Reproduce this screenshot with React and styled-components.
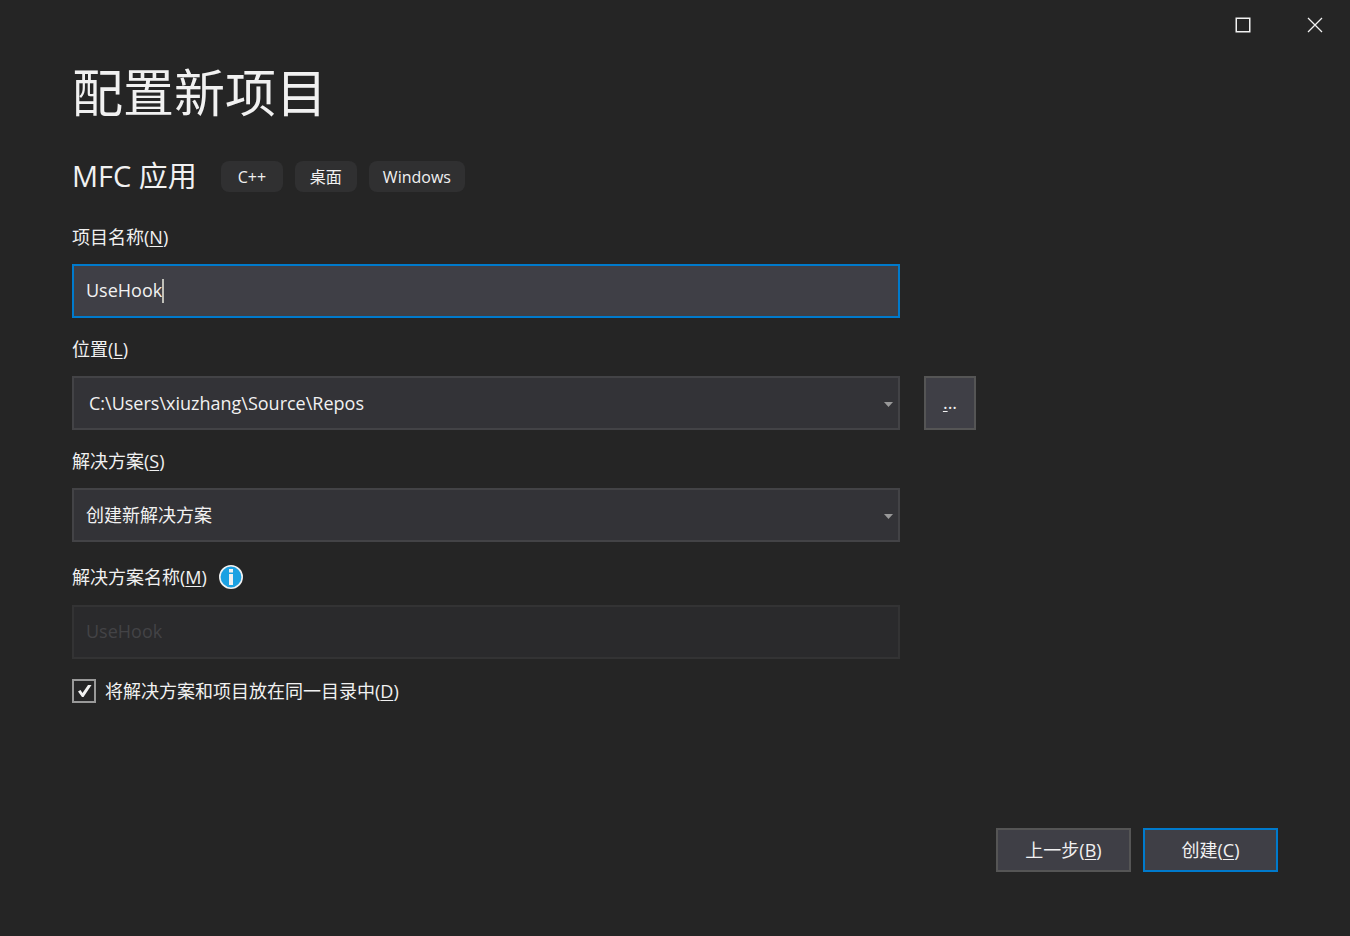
import React, { useState } from 'react'
import styled, { createGlobalStyle } from 'styled-components'

const GlobalStyle = createGlobalStyle`
    * {
        box-sizing: border-box;
    }
    body {
        margin: 0;
        background: #252525;
    }
    body, button, input, select {
        font-family: "Open Sans", "Noto Sans CJK SC", sans-serif;
        font-size: 18px;
        color: #f1f1f1;
    }
`;
const Window = styled.div`
    display: flex;
    flex-flow: column;
    min-height: 100vh;
    background: #252525;
`;
const TitleBar = styled.div`
    display: flex;
    justify-content: flex-end;
    gap: 2px;
`;
const WindowButton = styled.button`
    display: flex;
    align-items: center;
    justify-content: center;
    width: 70px;
    height: 50px;
    padding: 0;
    border: none;
    background: transparent;
`;
const Form = styled.form`
    display: flex;
    flex: 1;
    flex-flow: column;
    padding: 12px 72px 64px;
`;
const Title = styled.h1`
    margin: 0;
    font-size: 51px;
    font-weight: 400;
    line-height: 60px;
`;
const Template = styled.div`
    display: flex;
    align-items: center;
    gap: 12px;
    margin: 34px 0 30px;
`;
const TemplateName = styled.h2`
    margin: 0 12px 0 0;
    font-size: 29px;
    font-weight: 400;
    line-height: 40px;
`;
const Tag = styled.span`
    min-width: 62px;
    padding: 1px 14px 0;
    border-radius: 8px;
    background: #303031;
    font-size: 16px;
    line-height: 30px;
    text-align: center;
`;
const Fields = styled.div`
    display: flex;
    flex-flow: column;
    gap: 20px;
`;
const Field = styled.div`
    display: flex;
    flex-flow: column;
    gap: 14px;
`;
const LabelRow = styled.div`
    display: flex;
    align-items: ${({$tall}) => $tall ? 'center' : 'flex-start'};
    gap: 12px;
    height: ${({$tall}) => $tall ? '29px' : '24px'};
    line-height: 22px;
`;
const ControlRow = styled.div`
    display: flex;
    gap: 24px;
`;
const Key = styled.span`
    text-decoration: underline;
    text-decoration-thickness: 1px;
    text-underline-offset: 2px;
`;
const TextBox = styled.label`
    display: flex;
    align-items: center;
    flex: 0 1 828px;
    height: 54px;
    padding: 0 12px;
    border: 2px solid ${({$disabled}) => $disabled ? '#333334' : '#007acc'};
    background: ${({$disabled}) => $disabled ? '#2a2a2c' : '#3f3f46'};
`;
const Input = styled.input`
    field-sizing: content;
    max-width: 100%;
    padding: 0 0 2px;
    border: none;
    outline: none;
    background: transparent;
    caret-color: transparent;

    &:disabled {
        color: #434346;
    }
`;
const Caret = styled.span`
    width: 2px;
    height: 24px;
    background: #c0c0b9;
`;
const SelectBox = styled.div`
    position: relative;
    flex: 0 1 828px;
`;
const Select = styled.select`
    display: block;
    width: 100%;
    height: 54px;
    padding: 0 32px 0 ${({$editable}) => $editable ? '15px' : '12px'};
    appearance: none;
    border: 2px solid #434346;
    border-radius: 0;
    background: #333337;
`;
const Arrow = styled.svg`
    position: absolute;
    top: 26px;
    right: 7px;
    pointer-events: none;
`;
const Button = styled.button`
    width: ${({$small}) => $small ? '52px' : '135px'};
    height: ${({$small}) => $small ? '54px' : '44px'};
    padding: 0 0 2px;
    border: 2px solid ${({$primary}) => $primary ? '#007acc' : '#555555'};
    background: #3f3f46;
`;
const CheckRow = styled.div`
    display: flex;
    align-items: center;
    gap: 9px;
    line-height: 24px;
`;
const CheckBox = styled.span`
    display: grid;
    width: 24px;
    height: 24px;

    & > * {
        grid-area: 1 / 1;
    }
    svg {
        pointer-events: none;
    }
`;
const Check = styled.input`
    width: 24px;
    height: 24px;
    margin: 0;
    appearance: none;
    border: 2px solid #999999;
    background: #252526;
`;
const Footer = styled.div`
    display: flex;
    justify-content: flex-end;
    gap: 12px;
    margin-top: auto;
    padding-top: 24px;
`;

const ArrowIcon = () => (
    <Arrow width="9" height="5" viewBox="0 0 9 5" aria-hidden="true">
        <path d="M0 0h9L4.5 5z" fill="#999999" />
    </Arrow>
)

const InfoIcon = () => (
    <svg width="24" height="24" viewBox="0 0 24 24" aria-hidden="true">
        <circle cx="12" cy="12" r="11.2" fill="#1ba1e2" stroke="#f1f1f1" strokeWidth="1.6" />
        <path d="M10 4h4v3.500h-4zM10 9h4v11h-4z" fill="#f1f1f1" />
    </svg>
)

const App = () => {
    const [name, setName] = useState('UseHook')
    const [sameFolder, setSameFolder] = useState(true)
    return (
        <Window>
            <GlobalStyle />
            <TitleBar>
                <WindowButton aria-label="最大化">
                    <svg width="16" height="16" viewBox="0 0 16 16">
                        <path d="M1.25 1.25h13.5v13.5H1.25z" fill="none" stroke="#f1f1f1" strokeWidth="1.5" />
                    </svg>
                </WindowButton>
                <WindowButton aria-label="关闭">
                    <svg width="16" height="16" viewBox="0 0 16 16">
                        <path d="M1 1l14 14M15 1L1 15" stroke="#f1f1f1" strokeWidth="1.3" />
                    </svg>
                </WindowButton>
            </TitleBar>
            <Form onSubmit={e => e.preventDefault()}>
                <Title>配置新项目</Title>
                <Template>
                    <TemplateName>MFC 应用</TemplateName>
                    {['C++', '桌面', 'Windows'].map(item => (
                        <Tag key={item}>{item}</Tag>
                    ))}
                </Template>
                <Fields>
                    <Field>
                        <LabelRow>
                            <label htmlFor="project">项目名称(<Key>N</Key>)</label>
                        </LabelRow>
                        <ControlRow>
                            <TextBox htmlFor="project">
                                <Input id="project" value={name} onChange={e => setName(e.target.value)} />
                                <Caret />
                            </TextBox>
                        </ControlRow>
                    </Field>
                    <Field>
                        <LabelRow>
                            <label htmlFor="location">位置(<Key>L</Key>)</label>
                        </LabelRow>
                        <ControlRow>
                            <SelectBox>
                                <Select id="location" $editable>
                                    <option>C:\Users\xiuzhang\Source\Repos</option>
                                </Select>
                                <ArrowIcon />
                            </SelectBox>
                            <Button type="button" $small><Key>.</Key>..</Button>
                        </ControlRow>
                    </Field>
                    <Field>
                        <LabelRow>
                            <label htmlFor="solution">解决方案(<Key>S</Key>)</label>
                        </LabelRow>
                        <ControlRow>
                            <SelectBox>
                                <Select id="solution">
                                    <option>创建新解决方案</option>
                                </Select>
                                <ArrowIcon />
                            </SelectBox>
                        </ControlRow>
                    </Field>
                    <Field>
                        <LabelRow $tall>
                            <label htmlFor="solutionName">解决方案名称(<Key>M</Key>)</label>
                            <InfoIcon />
                        </LabelRow>
                        <ControlRow>
                            <TextBox htmlFor="solutionName" $disabled>
                                <Input id="solutionName" value={name} disabled />
                            </TextBox>
                        </ControlRow>
                    </Field>
                    <CheckRow>
                        <CheckBox>
                            <Check
                                id="sameFolder"
                                type="checkbox"
                                checked={sameFolder}
                                onChange={e => setSameFolder(e.target.checked)}
                            />
                            {sameFolder && (
                                <svg width="24" height="24" viewBox="0 0 24 24" aria-hidden="true">
                                    <path d="M6 12.5L8.5 11l2 3L16 6h3.5l-8 12H10z" fill="#f1f1f1" />
                                </svg>
                            )}
                        </CheckBox>
                        <label htmlFor="sameFolder">将解决方案和项目放在同一目录中(<Key>D</Key>)</label>
                    </CheckRow>
                </Fields>
                <Footer>
                    <Button type="button">上一步(<Key>B</Key>)</Button>
                    <Button type="submit" $primary>创建(<Key>C</Key>)</Button>
                </Footer>
            </Form>
        </Window>
    )
}

export default App
